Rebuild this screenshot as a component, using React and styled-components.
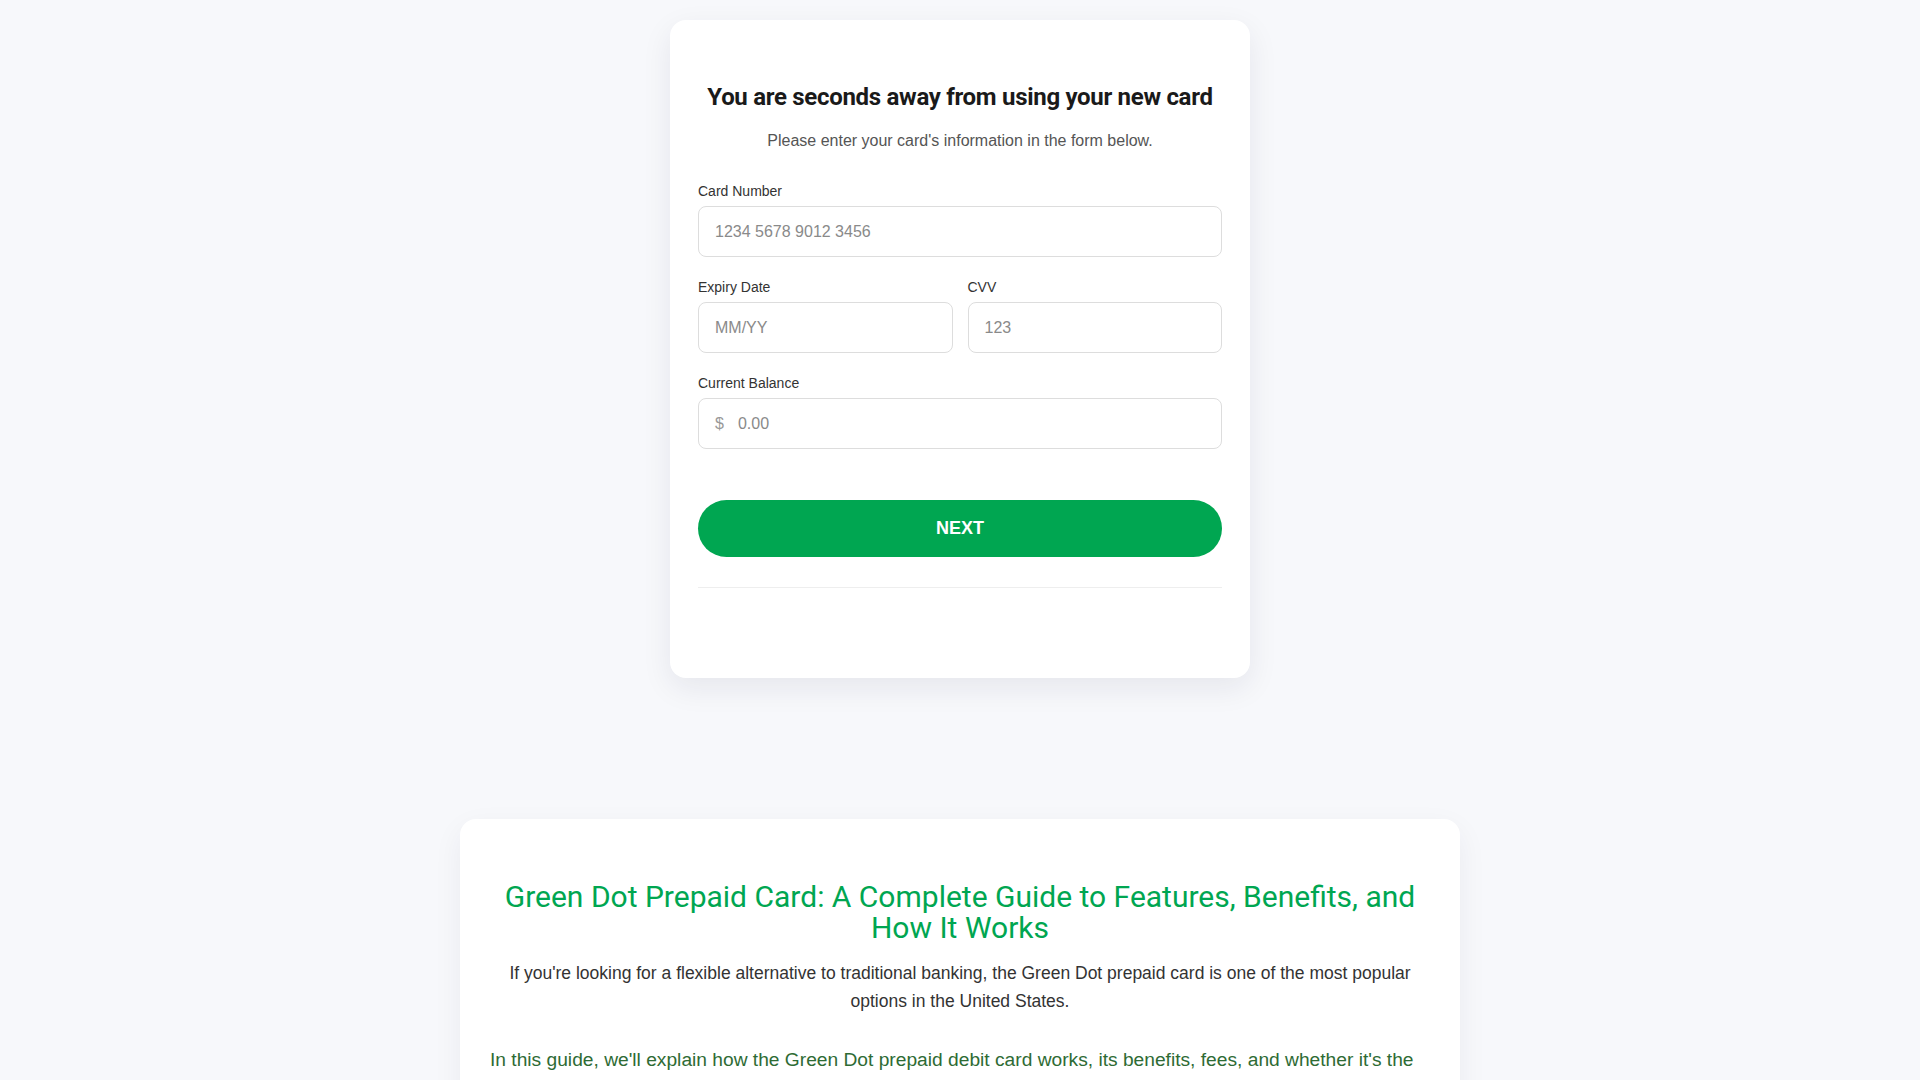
import React, { useState } from 'react';
import styled, { createGlobalStyle } from 'styled-components';

const GlobalStyle = createGlobalStyle`
  * { box-sizing: border-box; }
  body {
    margin: 0;
    background: #f7f8fb;
    font-family: "Liberation Sans", Arial, sans-serif;
    color: #333;
  }
`;

const Page = styled.div`
  display: flex;
  flex-direction: column;
  align-items: center;
  padding: 20px 20px 60px;
  gap: 141px;
`;

const FormCard = styled.div`
  width: 580px;
  background: #fff;
  border-radius: 16px;
  box-shadow: 0 10px 30px rgba(20, 30, 60, 0.08);
  padding: 62px 28px 90px;
`;

const Title = styled.h1`
  margin: 0 0 16px;
  font-family: Roboto, "Noto Sans", sans-serif;
  font-size: 24px;
  line-height: 31px;
  font-weight: 700;
  letter-spacing: -0.3px;
  color: #1a1a1a;
  text-align: center;
`;

const Subtitle = styled.p`
  margin: 0 0 28px;
  font-size: 16px;
  line-height: 24px;
  color: #555;
  text-align: center;
`;

const Field = styled.div`
  margin-bottom: 20px;
  min-width: 0;
`;

const Row = styled.div`
  display: grid;
  grid-template-columns: 1fr 1fr;
  gap: 0 15px;
`;

const Label = styled.label`
  display: block;
  margin-bottom: 5px;
  font-size: 14px;
  line-height: 20px;
  color: #333;
`;

const InputBox = styled.div`
  display: flex;
  align-items: center;
  height: 51px;
  padding: 0 16px;
  border: 1px solid #ddd;
  border-radius: 8px;
  background: #fff;
`;

const Prefix = styled.span`
  margin-right: 14px;
  font-size: 16px;
  color: #999;
`;

const Input = styled.input`
  flex: 1;
  min-width: 0;
  border: none;
  outline: none;
  padding: 0;
  background: transparent;
  font-family: "Liberation Sans", Arial, sans-serif;
  font-size: 16px;
  color: #333;
  &::placeholder { color: #8a8a8a; }
`;

const NextButton = styled.button`
  display: block;
  width: 100%;
  height: 57px;
  margin-top: 51px;
  border: none;
  border-radius: 40px;
  background: #00a651;
  color: #fff;
  font-family: "Liberation Sans", Arial, sans-serif;
  font-size: 18px;
  font-weight: 700;
  cursor: pointer;
`;

const Divider = styled.hr`
  margin: 30px 0 0;
  border: none;
  border-top: 1px solid #eee;
`;

const ArticleCard = styled.article`
  width: 1000px;
  background: #fff;
  border-radius: 16px;
  box-shadow: 0 10px 30px rgba(20, 30, 60, 0.06);
  padding: 62px 30px 40px;
`;

const ArticleTitle = styled.h2`
  margin: 0 0 16px;
  font-family: Roboto, "Noto Sans", sans-serif;
  font-size: 30px;
  line-height: 31px;
  font-weight: 400;
  color: #00a651;
  text-align: center;
`;

const Lead = styled.p`
  margin: 0 0 30px;
  font-size: 17.5px;
  line-height: 28px;
  color: #333;
  text-align: center;
`;

const Para = styled.p`
  margin: 0 0 20px;
  font-size: 19.2px;
  line-height: 1.6;
  color: ${p => p.$accent ? '#2e6b34' : '#333'};
`;

const Field_ = ({ label, placeholder, prefix }) => (
  <Field>
    <Label>{label}</Label>
    <InputBox>
      {prefix && <Prefix>{prefix}</Prefix>}
      <Input placeholder={placeholder} />
    </InputBox>
  </Field>
);

export default function App() {
  const [sent, setSent] = useState(false);

  return (
    <Page>
      <GlobalStyle />
      <FormCard>
        <Title>You are seconds away from using your new card</Title>
        <Subtitle>Please enter your card's information in the form below.</Subtitle>
        <Field_ label="Card Number" placeholder="1234 5678 9012 3456" />
        <Row>
          <Field_ label="Expiry Date" placeholder="MM/YY" />
          <Field_ label="CVV" placeholder="123" />
        </Row>
        <Field_ label="Current Balance" placeholder="0.00" prefix="$" />
        <NextButton onClick={() => setSent(!sent)}>NEXT</NextButton>
        <Divider />
      </FormCard>

      <ArticleCard>
        <ArticleTitle>Green Dot Prepaid Card: A Complete Guide to Features, Benefits, and How It Works</ArticleTitle>
        <Lead>
          If you're looking for a flexible alternative to traditional banking, the Green Dot prepaid card is one of the most popular options in the United States.
        </Lead>
        <Para $accent>
          In this guide, we'll explain how the Green Dot prepaid debit card works, its benefits, fees, and whether it's the right choice for your everyday spending needs.
        </Para>
      </ArticleCard>
    </Page>
  );
}
